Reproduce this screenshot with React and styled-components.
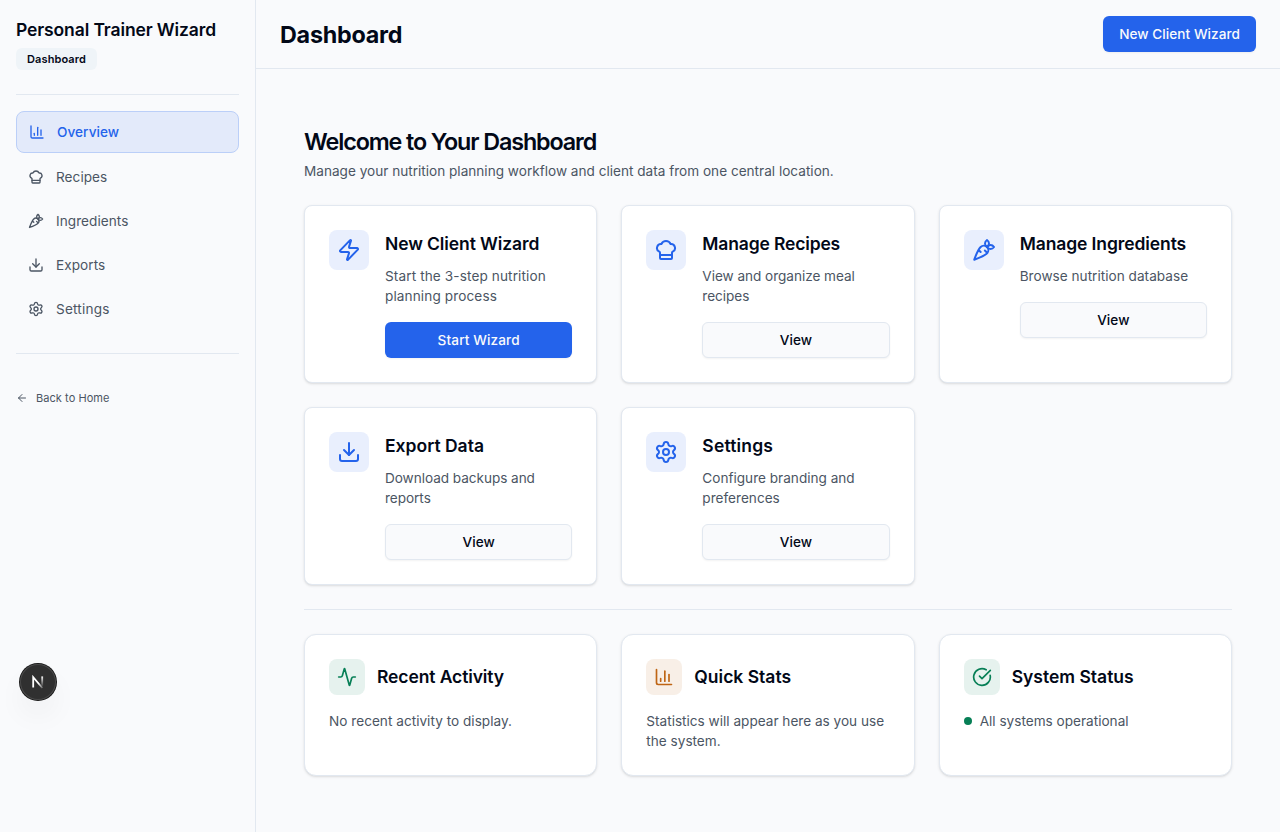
import React from "react";
import styled, { createGlobalStyle, css } from "styled-components";
import {
  Activity,
  ArrowLeft,
  Carrot,
  ChartColumn,
  ChefHat,
  CircleCheckBig,
  Download,
  Settings,
  Zap,
} from "lucide-react";

const colors = {
  page: "#f9fafc",
  ink: "#020817",
  muted: "#4b5563",
  line: "#e2e8f0",
  blue: "#2463eb",
  green: "#077f56",
  amber: "#bf6514",
};

const GlobalStyle = createGlobalStyle`
  *, *::before, *::after { box-sizing: border-box; }
  body {
    margin: 0;
    background: ${colors.page};
    color: ${colors.ink};
    font-family: Inter, sans-serif;
    font-size: 13.6px;
    line-height: 20px;
    -webkit-font-smoothing: antialiased;
  }
  h1, h2, h3, p { margin: 0; }
  svg { display: block; flex-shrink: 0; }
`;

const Shell = styled.div`
  display: grid;
  grid-template-columns: 256px 1fr;
  height: 832px;
  overflow: hidden;
`;

const Sidebar = styled.aside`
  display: flex;
  flex-direction: column;
  padding: 16px;
  border-right: 1px solid ${colors.line};
`;

const Brand = styled.div`
  display: flex;
  flex-direction: column;
  align-items: flex-start;
  gap: 4px;
  padding-bottom: 24px;
  border-bottom: 1px solid ${colors.line};
`;

const BrandName = styled.h2`
  font-size: 17.5px;
  line-height: 28px;
  font-weight: 600;
  letter-spacing: -0.12px;
  white-space: nowrap;
`;

const Badge = styled.span`
  height: 22px;
  padding: 0 11px;
  border-radius: 6px;
  background: #eff4f8;
  font-size: 11px;
  line-height: 22px;
  font-weight: 600;
  letter-spacing: 0.11px;
`;

const Nav = styled.nav`
  display: flex;
  flex-direction: column;
  gap: 4px;
  padding: 16px 0 24px;
  border-bottom: 1px solid ${colors.line};
`;

const NavItem = styled.a`
  display: flex;
  align-items: center;
  gap: 12px;
  height: 40px;
  padding: 0 12px;
  border-radius: 8px;
  color: ${colors.muted};
  letter-spacing: ${({ $tracking = 0.05 }) => $tracking}px;

  ${({ $active }) =>
    $active &&
    css`
      height: 42px;
      border: 1px solid #bbcff8;
      background: #e3eafa;
      color: ${colors.blue};
      font-weight: 500;
    `}
`;

const BackLink = styled.a`
  display: flex;
  align-items: center;
  gap: 8px;
  margin-top: 36px;
  height: 16px;
  color: ${colors.muted};
  font-size: 11px;
  line-height: 16px;
  letter-spacing: 0.06px;
`;

const Main = styled.main`
  display: flex;
  flex-direction: column;
  min-width: 0;
`;

const Header = styled.header`
  display: flex;
  align-items: center;
  justify-content: space-between;
  height: 69px;
  padding: 0 24px;
  border-bottom: 1px solid ${colors.line};
`;

const PageTitle = styled.h1`
  padding-top: 2px;
  font-size: 23.3px;
  line-height: 32px;
  font-weight: 700;
  letter-spacing: -0.22px;
`;

const Button = styled.button`
  height: 36px;
  width: ${({ $block }) => ($block ? "100%" : "auto")};
  padding: 0 16px;
  border: ${({ $outline }) => ($outline ? `1px solid ${colors.line}` : "0")};
  border-radius: 6px;
  background: ${({ $outline }) => ($outline ? colors.page : colors.blue)};
  color: ${({ $outline }) => ($outline ? colors.ink : colors.page)};
  box-shadow: 0 1px 2px rgba(0, 0, 0, 0.05);
  font-family: inherit;
  font-size: 13.6px;
  line-height: 20px;
  font-weight: 500;
  letter-spacing: ${({ $tracking = 0.05 }) => $tracking}px;
  white-space: nowrap;
`;

const Content = styled.section`
  display: flex;
  flex-direction: column;
  gap: 24px;
  padding: 57px 48px 48px;
`;

const Intro = styled.div`
  display: flex;
  flex-direction: column;
  gap: 3px;
`;

const Welcome = styled.h2`
  font-size: 23.3px;
  line-height: 32px;
  font-weight: 600;
  letter-spacing: -1.1px;
`;

const Text = styled.p`
  color: ${colors.muted};
  letter-spacing: ${({ $tracking = 0 }) => $tracking}px;
`;

const CardGrid = styled.div`
  display: grid;
  grid-template-columns: repeat(3, 1fr);
  gap: 24px;
`;

const Divider = styled.hr`
  width: 100%;
  height: 1px;
  margin: 0;
  border: 0;
  background: ${colors.line};
`;

const Card = styled.article`
  display: flex;
  padding: 24px;
  border: 1px solid ${colors.line};
  background: #ffffff;
  box-shadow: 0 1px 3px rgba(0, 0, 0, 0.1), 0 1px 2px -1px rgba(0, 0, 0, 0.1);
`;

const ActionCard = styled(Card)`
  gap: 16px;
  min-height: 178px;
  border-radius: 8px;
`;

const StatCard = styled(Card)`
  flex-direction: column;
  gap: 16px;
  min-height: 142px;
  border-radius: 12px;
`;

const tones = {
  blue: { ink: colors.blue, fill: "#e9effd" },
  green: { ink: colors.green, fill: "#e6f2ee" },
  amber: { ink: colors.amber, fill: "#f8efe7" },
};

const IconTile = styled.div`
  display: grid;
  place-items: center;
  flex: none;
  width: ${({ $size }) => $size}px;
  height: ${({ $size }) => $size}px;
  border-radius: 8px;
  background: ${({ $tone }) => tones[$tone].fill};
  color: ${({ $tone }) => tones[$tone].ink};
`;

const ActionBody = styled.div`
  flex: 1;
  min-width: 0;
`;

const CardTitle = styled.h3`
  font-size: 17.5px;
  line-height: 28px;
  font-weight: 600;
  letter-spacing: ${({ $tracking = -0.1 }) => $tracking}px;
  white-space: nowrap;
`;

const ActionText = styled(Text)`
  margin: 8px 0 16px;
`;

const StatHead = styled.div`
  display: flex;
  align-items: center;
  gap: 12px;
`;

const StatusLine = styled.div`
  display: flex;
  align-items: center;
  gap: 8px;
`;

const StatusDot = styled.span`
  width: 8px;
  height: 8px;
  border-radius: 50%;
  background: ${colors.green};
`;

const DevBadge = styled.div`
  position: fixed;
  left: 20px;
  top: 664px;
  display: grid;
  place-items: center;
  width: 36px;
  height: 36px;
  border-radius: 50%;
  background: #303030;
  box-shadow: 0 0 0 1px #171717, inset 0 0 0 1px #4a4a4a,
    0 16px 32px -8px rgba(0, 0, 0, 0.14);
`;

const navItems = [
  { label: "Overview", icon: ChartColumn, active: true },
  { label: "Recipes", icon: ChefHat },
  { label: "Ingredients", icon: Carrot },
  { label: "Exports", icon: Download },
  { label: "Settings", icon: Settings, tracking: 0.19 },
];

const actions = [
  {
    title: "New Client Wizard",
    text: "Start the 3-step nutrition planning process",
    textTracking: 0.11,
    icon: Zap,
    button: "Start Wizard",
    buttonTracking: 0.12,
    primary: true,
  },
  {
    title: "Manage Recipes",
    titleTracking: -0.15,
    text: "View and organize meal recipes",
    textTracking: -0.04,
    icon: ChefHat,
    button: "View",
  },
  {
    title: "Manage Ingredients",
    text: "Browse nutrition database",
    textTracking: 0.02,
    icon: Carrot,
    button: "View",
  },
  {
    title: "Export Data",
    titleTracking: 0,
    text: "Download backups and reports",
    textTracking: -0.05,
    icon: Download,
    button: "View",
  },
  {
    title: "Settings",
    titleTracking: 0.18,
    text: "Configure branding and preferences",
    icon: Settings,
    button: "View",
  },
];

const stats = [
  {
    title: "Recent Activity",
    text: "No recent activity to display.",
    textTracking: 0.02,
    icon: Activity,
    tone: "green",
  },
  {
    title: "Quick Stats",
    titleTracking: 0,
    text: "Statistics will appear here as you use the system.",
    textTracking: 0,
    icon: ChartColumn,
    tone: "amber",
  },
  {
    title: "System Status",
    titleTracking: 0,
    text: "All systems operational",
    icon: CircleCheckBig,
    tone: "green",
    status: true,
  },
];

function NextMark() {
  return (
    <svg width="14" height="14" viewBox="0 0 14 14" fill="none">
      <defs>
        <linearGradient id="stem" x1="0" y1="1" x2="0" y2="12" gradientUnits="userSpaceOnUse">
          <stop stopColor="#fff" />
          <stop offset="1" stopColor="#fff" stopOpacity="0" />
        </linearGradient>
        <linearGradient id="diagonal" x1="8" y1="8" x2="12" y2="13" gradientUnits="userSpaceOnUse">
          <stop stopColor="#fff" />
          <stop offset="1" stopColor="#fff" stopOpacity="0.2" />
        </linearGradient>
      </defs>
      <path d="M2.2 12.6V2.2L11.4 13" stroke="url(#diagonal)" strokeWidth="1.8" />
      <path d="M11.2 1.4V11" stroke="url(#stem)" strokeWidth="1.8" />
    </svg>
  );
}

export default function App() {
  return (
    <>
      <GlobalStyle />
      <Shell>
        <Sidebar>
          <Brand>
            <BrandName>Personal Trainer Wizard</BrandName>
            <Badge>Dashboard</Badge>
          </Brand>
          <Nav>
            {navItems.map(({ label, icon: Icon, active, tracking }) => (
              <NavItem key={label} $active={active} $tracking={tracking}>
                <Icon size={16} />
                {label}
              </NavItem>
            ))}
          </Nav>
          <BackLink>
            <ArrowLeft size={12} />
            Back to Home
          </BackLink>
        </Sidebar>
        <Main>
          <Header>
            <PageTitle>Dashboard</PageTitle>
            <Button>New Client Wizard</Button>
          </Header>
          <Content>
            <Intro>
              <Welcome>Welcome to Your Dashboard</Welcome>
              <Text>
                Manage your nutrition planning workflow and client data from one central location.
              </Text>
            </Intro>
            <CardGrid>
              {actions.map((action) => (
                <ActionCard key={action.title}>
                  <IconTile $size={40} $tone="blue">
                    <action.icon size={24} />
                  </IconTile>
                  <ActionBody>
                    <CardTitle $tracking={action.titleTracking}>{action.title}</CardTitle>
                    <ActionText $tracking={action.textTracking}>{action.text}</ActionText>
                    <Button $block $outline={!action.primary} $tracking={action.buttonTracking}>
                      {action.button}
                    </Button>
                  </ActionBody>
                </ActionCard>
              ))}
            </CardGrid>
            <Divider />
            <CardGrid>
              {stats.map((stat) => (
                <StatCard key={stat.title}>
                  <StatHead>
                    <IconTile $size={36} $tone={stat.tone}>
                      <stat.icon size={20} />
                    </IconTile>
                    <CardTitle $tracking={stat.titleTracking}>{stat.title}</CardTitle>
                  </StatHead>
                  {stat.status ? (
                    <StatusLine>
                      <StatusDot />
                      <Text $tracking={stat.textTracking}>{stat.text}</Text>
                    </StatusLine>
                  ) : (
                    <Text $tracking={stat.textTracking}>{stat.text}</Text>
                  )}
                </StatCard>
              ))}
            </CardGrid>
          </Content>
        </Main>
      </Shell>
      <DevBadge>
        <NextMark />
      </DevBadge>
    </>
  );
}
